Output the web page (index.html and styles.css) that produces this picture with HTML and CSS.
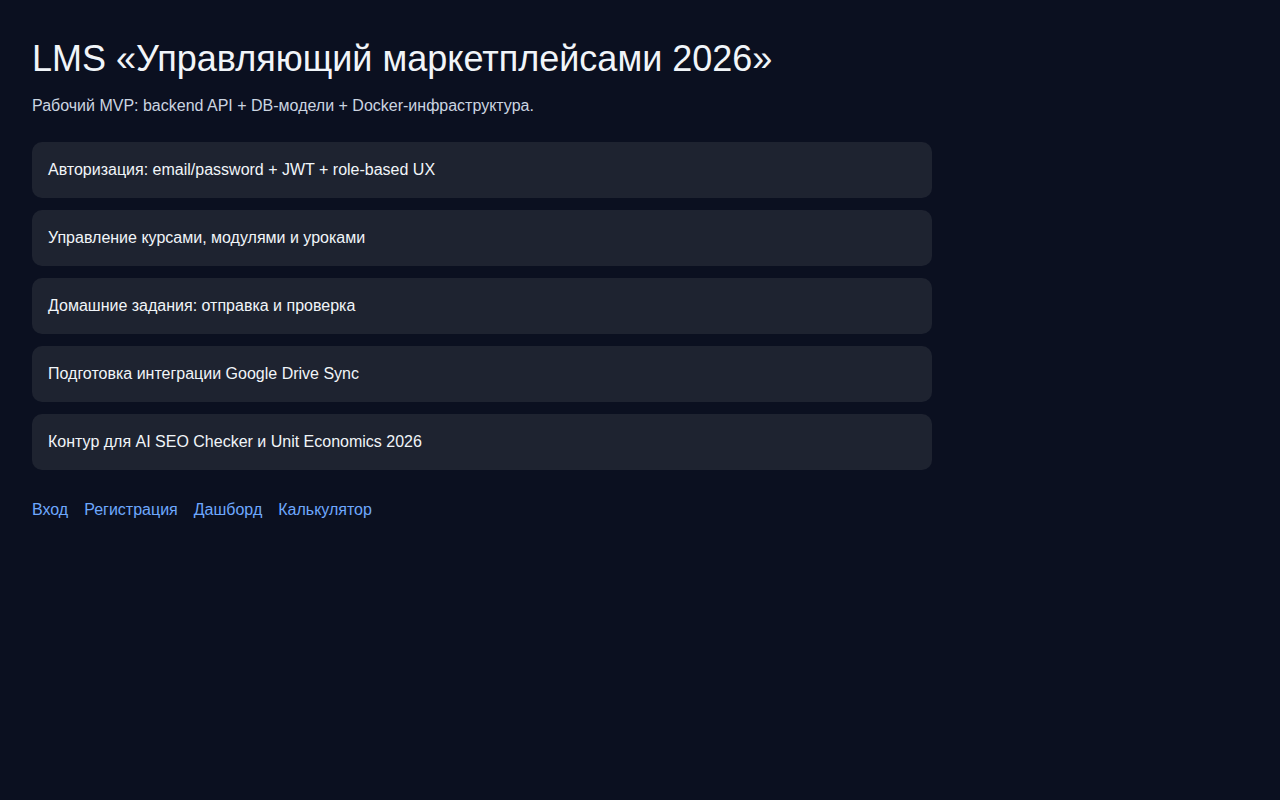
FILE: index.html
```html
<!DOCTYPE html>
<html lang="ru">
<head>
    <meta charset="UTF-8">
    <meta name="viewport" content="width=device-width, initial-scale=1.0">
    <title>LMS</title>
    <link rel="stylesheet" href="styles.css">
</head>
<body>
    <main class="container">
        <h1>LMS «Управляющий маркетплейсами 2026»</h1>
        <p class="lead">Рабочий MVP: backend API + DB-модели + Docker-инфраструктура.</p>
        <div class="features">
            <div class="card">Авторизация: email/password + JWT + role-based UX</div>
            <div class="card">Управление курсами, модулями и уроками</div>
            <div class="card">Домашние задания: отправка и проверка</div>
            <div class="card">Подготовка интеграции Google Drive Sync</div>
            <div class="card">Контур для AI SEO Checker и Unit Economics 2026</div>
        </div>
        <nav class="links">
            <a href="#">Вход</a>
            <a href="#">Регистрация</a>
            <a href="#">Дашборд</a>
            <a href="#">Калькулятор</a>
        </nav>
    </main>
</body>
</html>
```

FILE: styles.css
```css
body {
    margin: 0;
    font-family: "Liberation Sans", Arial, sans-serif;
    font-size: 16px;
    line-height: 1.5;
    background-color: #0b1020;
    color: #f1f5f9;
}

.container {
    max-width: 900px;
    padding: 32px;
}

h1 {
    margin: 0 0 8px;
    font-size: 36px;
    font-weight: normal;
    line-height: 1.5;
}

.lead {
    margin: 0 0 24px;
    color: #cbd5e1;
}

.features {
    display: flex;
    flex-direction: column;
    gap: 12px;
}

.card {
    background-color: #1e2330;
    border-radius: 10px;
    padding: 16px;
}

.links {
    display: flex;
    gap: 16px;
    margin-top: 28px;
}

.links a {
    color: #6ea8fe;
    text-decoration: none;
}
```
